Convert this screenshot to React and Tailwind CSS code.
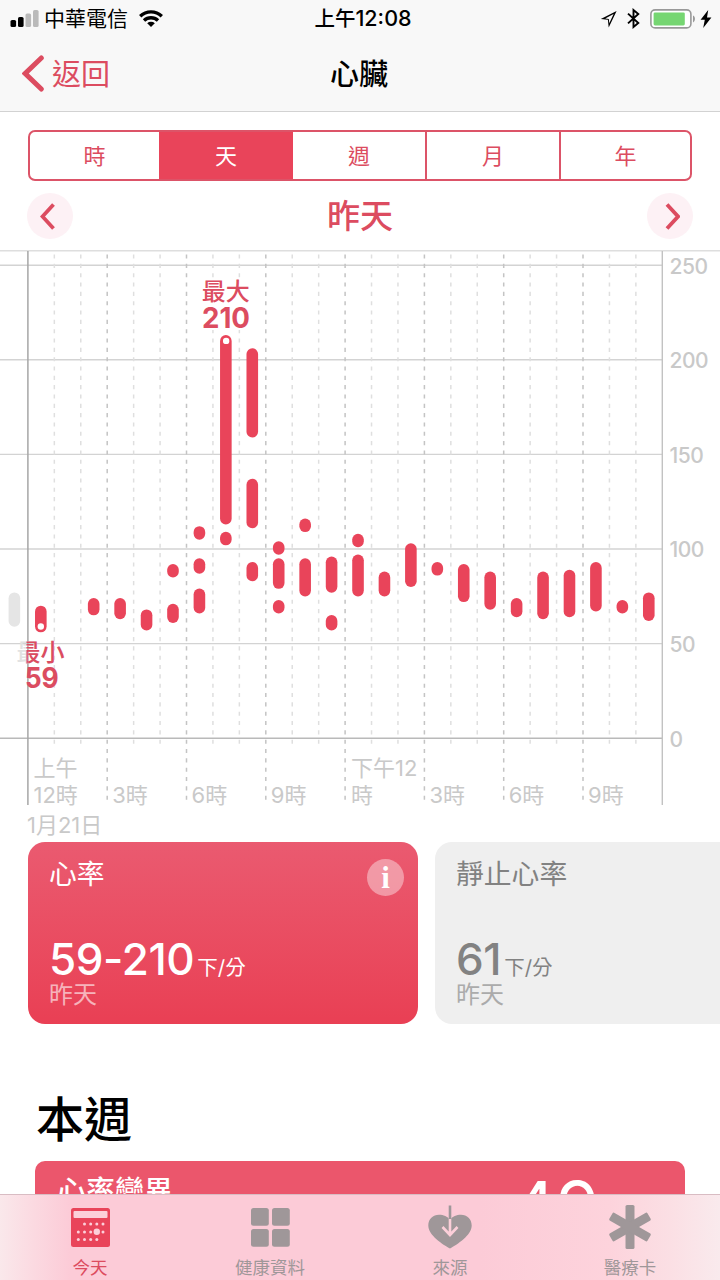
import React from 'react';

const RANGES = ['時', '天', '週', '月', '年'];

// [hour, low bpm, high bpm]
const SAMPLES = [
  [0, 59, 67], [2, 68, 71], [3, 66, 71], [4, 60, 65],
  [5, 88, 89], [5, 64, 68],
  [6, 108, 109], [6, 90, 92], [6, 69, 76],
  [7, 116, 210], [7, 105, 106],
  [8, 162, 203], [8, 114, 134], [8, 86, 90],
  [9, 100, 101], [9, 82, 92], [9, 69, 70],
  [10, 112, 113], [10, 78, 92],
  [11, 80, 93], [11, 60, 62],
  [12, 104, 105], [12, 78, 94],
  [13, 78, 85], [14, 83, 100], [15, 89, 90], [16, 75, 89],
  [17, 71, 85], [18, 67, 71], [19, 66, 85], [20, 67, 86],
  [21, 70, 90], [22, 69, 70], [23, 65, 74],
];

const HOUR_LABELS = [
  [3, '3時'], [6, '6時'], [9, '9時'], [15, '3時'], [18, '6時'], [21, '9時'],
];

const LEFT = 27.9;
const RIGHT = 662.3;
const STEP = (RIGHT - LEFT) / 24;

const hourX = (hour) => LEFT + hour * STEP;
const bpmY = (bpm) => 488.2 - bpm * 1.892;

const Bar = ({ hour, low, high, color }) => (
  <line
    x1={hourX(hour + 0.5) - 0.3}
    x2={hourX(hour + 0.5) - 0.3}
    y1={bpmY(high)}
    y2={bpmY(low)}
    stroke={color}
    strokeWidth="11.6"
    strokeLinecap="round"
  />
);

const MinLabel = ({ fill, clipPath }) => (
  <g fill={fill} clipPath={clipPath} textAnchor="middle">
    <text x="40.5" y="411" fontSize="24" fontWeight="500">最小</text>
    <text x="41.7" y="437.5" fontSize="28" fontWeight="700" textLength="34" lengthAdjust="spacingAndGlyphs">59</text>
  </g>
);

const HeartChart = () => (
  <svg className="block h-[590px] w-[720px]" viewBox="0 0 720 590">
    <defs>
      <clipPath id="day">
        <rect x="26.5" y="0" width="640" height="590" />
      </clipPath>
    </defs>

    <line x1="0" x2="720" y1="0.7" y2="0.7" stroke="#dedede" strokeWidth="1.4" />
    {[250, 200, 150, 100, 50].map((bpm) => (
      <line key={bpm} x1="0" x2={RIGHT} y1={bpmY(bpm)} y2={bpmY(bpm)} stroke="#d3d3d3" strokeWidth="1.4" />
    ))}
    {Array.from({ length: 23 }, (_, i) => i + 1).map((hour) => (
      <line
        key={hour}
        x1={hourX(hour)}
        x2={hourX(hour)}
        y1="2"
        y2={hour % 3 === 0 ? 554 : 498}
        stroke={hour % 3 === 0 ? '#c4c4c4' : '#dfdfdf'}
        strokeWidth="1.5"
        strokeDasharray="4.1 5.23"
        strokeDashoffset="-2.5"
      />
    ))}
    <line x1="0" x2={RIGHT} y1={bpmY(0)} y2={bpmY(0)} stroke="#b9b9b9" strokeWidth="1.6" />
    <line x1={LEFT} x2={LEFT} y1="1" y2="555" stroke="#a6a6a6" strokeWidth="1.5" />
    <line x1={RIGHT} x2={RIGHT} y1="1" y2="555" stroke="#c2c2c2" strokeWidth="1.4" />

    <Bar hour={-1} low={62} high={74} color="#e5e5e5" />
    {SAMPLES.map(([hour, low, high]) => (
      <Bar key={`${hour}-${low}`} hour={hour} low={low} high={high} color="#e9445a" />
    ))}
    <circle cx={hourX(7.5)} cy={bpmY(210)} r="3.2" fill="#fff" />
    <circle cx={hourX(0.5) - 0.3} cy={bpmY(59)} r="3.2" fill="#fff" />

    <g fill="#dc4c60" textAnchor="middle">
      <rect x="200" y="30" width="52" height="50" fill="#fff" />
      <text x="225.8" y="50" fontSize="24" fontWeight="500">最大</text>
      <text x="226" y="77.5" fontSize="28.5" fontWeight="700" textLength="48" lengthAdjust="spacingAndGlyphs">210</text>
    </g>
    <MinLabel fill="#e2e2e2" />
    <MinLabel fill="#dc4c60" clipPath="url(#day)" />

    <g fill="#c9c9c9" fontSize="22">
      {[250, 200, 150, 100, 50, 0].map((bpm) => (
        <text key={bpm} x="669.5" y={bpmY(bpm) + 8.4} fontSize="21" fontWeight="500" letterSpacing="-0.5">{bpm}</text>
      ))}
      <text x="33.5" y="526">上午</text>
      <text x="33.5" y="552.5">12時</text>
      <text x="351" y="526">下午12</text>
      <text x="351" y="552.5">時</text>
      {HOUR_LABELS.map(([hour, label]) => (
        <text key={hour} x={hourX(hour) + 5} y="552.5">{label}</text>
      ))}
      <text x="27" y="582.5">1月21日</text>
    </g>
  </svg>
);

const StatusBar = () => (
  <div className="grid h-9 grid-cols-3 items-center pl-2.5 pr-2 text-black">
    <div className="flex items-center">
      <svg className="h-[18px] w-[29px]" viewBox="0 0 29 18">
        <rect x="0.5" y="10" width="5.6" height="7" rx="1.6" />
        <rect x="8" y="7" width="5.6" height="10" rx="1.6" />
        <rect x="15.5" y="3.5" width="5.6" height="13.5" rx="1.6" fill="#bababa" />
        <rect x="23" y="0" width="5.6" height="17" rx="1.6" fill="#bababa" />
      </svg>
      <span className="ml-[5px] text-[21px] leading-9">中華電信</span>
      <svg className="ml-[11px] h-[18px] w-6" viewBox="0 0 24 18" fill="none" stroke="#000" strokeWidth="3.4">
        <path d="M1.2 6.2a15.6 15.6 0 0 1 21.6 0" />
        <path d="M5 10.600a10.200 10.200 0 0 1 14 0" />
        <path d="M12 17 8.200 13.300a5.600 5.600 0 0 1 7.600 0Z" fill="#000" stroke="none" />
      </svg>
    </div>
    <div className="flex items-baseline justify-center pl-1 font-medium leading-9">
      <span className="text-[20.5px]">上午</span>
      <span className="text-[21.5px] leading-9">12:08</span>
    </div>
    <div className="flex items-center justify-end">
      <svg className="h-[18px] w-[17px]" viewBox="0 0 17 18">
        <path fillRule="evenodd" d="M16.600 1 .8 8.900l7.100.9.800 7.600Zm-3 3.100-4.300 9.100-.5-4.200-3.600-.6Z" />
      </svg>
      <svg className="ml-2.5 h-[21px] w-[13px]" viewBox="0 0 13 21" fill="none" stroke="#000" strokeWidth="1.9">
        <path d="m1 5.6 10.300 9.400L6.500 19V2l4.800 4L1 15.4" />
      </svg>
      <svg className="ml-2.5 h-5 w-[46px]" viewBox="0 0 46 20">
        <rect x="0.9" y="0.9" width="40" height="18" rx="4.2" fill="#fff" stroke="#999" strokeWidth="1.6" />
        <rect x="3.6" y="3.4" width="31.2" height="13" rx="1.4" fill="#76d672" />
        <path d="M43 6.6c2.6 1 2.6 5.8 0 6.8Z" fill="#999" />
      </svg>
      <svg className="ml-1 h-[18px] w-3" viewBox="0 0 12 18">
        <path d="M8.2 0 .6 9.8h4.2L3.2 18 11.4 7.4H7Z" />
      </svg>
    </div>
  </div>
);

const NavBar = () => (
  <div className="grid h-[75px] grid-cols-3 items-center px-[22px]">
    <div className="flex items-center gap-2 text-[#dc4c60]">
      <svg className="h-[37px] w-[22px]" viewBox="0 0 22 37" fill="none" stroke="currentColor" strokeWidth="5" strokeLinecap="round">
        <path d="M19.3 3 3.2 18.5l16.1 15.5" />
      </svg>
      <span className="pt-0.5 text-[29px] leading-10">返回</span>
    </div>
    <h1 className="pr-0.5 pt-0.5 text-center text-[29px] font-medium leading-10">心臟</h1>
  </div>
);

const RoundButton = ({ path }) => (
  <button className="flex size-[46px] items-center justify-center rounded-full bg-[#fdf1f5] text-[#dc4c60]">
    <svg className="h-7 w-5" viewBox="0 0 20 28" fill="none" stroke="currentColor" strokeWidth="3.8">
      <path d={path} />
    </svg>
  </button>
);

const MetricCard = ({ title, value, active }) => (
  <div
    className={`h-[182px] w-[390px] shrink-0 rounded-[17px] px-[21px] pt-3 ${
      active ? 'bg-linear-to-b from-[#ea5a70] to-[#e93f54] text-white' : 'bg-[#efefef] text-[#828282]'
    }`}
  >
    <div className="flex h-[82px] items-start justify-between">
      <h2 className="text-[27.8px] leading-10">{title}</h2>
      {active && (
        <span className="-mr-[7px] mt-[5px] flex size-[37px] items-center justify-center rounded-full bg-white/40 font-['Liberation_Serif',serif] text-[31px] font-bold leading-none">
          i
        </span>
      )}
    </div>
    <div className="flex h-[47px] items-baseline">
      <span className="text-[44px] font-medium leading-[46px] tracking-[-0.4px]">{value}</span>
      <span className="ml-[3px] text-[20.5px] leading-none">下/分</span>
    </div>
    <p className={`text-[24px] leading-6 ${active ? 'text-white/60' : 'text-[#ababab]'}`}>昨天</p>
  </div>
);

const CalendarIcon = () => (
  <svg className="size-[39px]" viewBox="0 0 39 39">
    <rect width="39" height="39" rx="2.5" fill="#e9445a" />
    <rect x="2.5" y="3" width="34" height="7" rx="1" fill="#fccfd9" />
    <g fill="#fccfd9">
      {[13.5, 19.7, 25.8, 32].map((x) => <circle key={x} cx={x} cy="16" r="1.5" />)}
      {[7.3, 13.5, 19.7, 32].map((x) => <circle key={x} cx={x} cy="24" r="1.5" />)}
      {[7.3, 13.5, 19.7, 25.8].map((x) => <circle key={x} cx={x} cy="31.6" r="1.5" />)}
      <circle cx="25.8" cy="23.8" r="3.2" />
    </g>
  </svg>
);

const GridIcon = () => (
  <svg className="size-[39px]" viewBox="0 0 39 39" fill="currentColor">
    <rect width="17.8" height="17.8" rx="2.5" />
    <rect x="21" width="17.8" height="17.8" rx="2.5" />
    <rect y="21" width="17.8" height="17.8" rx="2.5" />
    <rect x="21" y="21" width="17.8" height="17.8" rx="2.5" />
  </svg>
);

const SourceIcon = () => (
  <svg className="h-[44px] w-11" viewBox="0 0 44 44" fill="none">
    <path d="M22 43.500C15 39.500.3 30.500.3 20.500.3 14 5 9.700 11 9.700c4.500 0 8.500 1.500 11 5.300 2.500-3.800 6.500-5.300 11-5.300 6 0 10.700 4.300 10.700 10.800C43.700 30.500 29 39.500 22 43.500Z" fill="currentColor" />
    <path d="M22 13.500v16M14.500 22l7.500 8 7.500-8" stroke="#fccfd9" strokeWidth="2.600" />
    <path d="M22 .5v13.500" stroke="currentColor" strokeWidth="2.600" />
  </svg>
);

const MedicalIcon = () => (
  <svg className="h-[44px] w-[42px]" viewBox="-21 -22 42 44" fill="currentColor">
    {[0, 60, 120].map((angle) => (
      <rect key={angle} x="-4.500" y="-22" width="9" height="44" rx="1.600" transform={`rotate(${angle})`} />
    ))}
  </svg>
);

const TABS = [
  { label: '今天', icon: CalendarIcon, active: true },
  { label: '健康資料', icon: GridIcon },
  { label: '來源', icon: SourceIcon },
  { label: '醫療卡', icon: MedicalIcon },
];

const TabBar = () => (
  <nav className="h-[86px] border-t border-[#d9bcc3] bg-[linear-gradient(90deg,#fae8eb_0px,#fbdbe2_30px,#fccbd7_70px,#fccbd7_480px,#fdd3dc_610px,#fbdfe4_670px,#f9eaed_720px)]">
    <ul className="grid h-full grid-cols-4">
      {TABS.map(({ label, icon: Icon, active }) => (
        <li key={label} className={`flex flex-col items-center pt-[9px] ${active ? 'text-[#dc4c60]' : 'text-[#9f9799]'}`}>
          <div className="flex h-[46px] items-center">
            <Icon />
          </div>
          <span className="mt-1.5 text-[17.5px] leading-6">{label}</span>
        </li>
      ))}
    </ul>
  </nav>
);

const App = () => {
  return (
    <div className="flex h-[1280px] w-[720px] flex-col overflow-hidden bg-white font-['Inter','Noto_Sans_CJK_TC',sans-serif]">
      <header className="h-28 shrink-0 border-b border-[#d2d2d2] bg-[#f8f8f8]">
        <StatusBar />
        <NavBar />
      </header>

      <main className="flex min-h-0 flex-1 flex-col overflow-hidden">
        <div className="mx-7 mt-[18px] grid h-[51px] shrink-0 grid-cols-[129px_134px_132px_134px_1fr] overflow-hidden rounded-[7px] border-2 border-[#dc5468]">
          {RANGES.map((range, i) => (
            <button
              key={range}
              className={`pt-px text-[22px] ${i > 2 ? 'border-l-2 border-[#dc5468]' : ''} ${
                range === '天' ? 'bg-[#e9445a] text-white' : 'text-[#dc4c60]'
              }`}
            >
              {range}
            </button>
          ))}
        </div>

        <div className="mt-3 flex h-[46px] shrink-0 items-center justify-between px-[27px]">
          <RoundButton path="M13.500 2.500 2.500 14.500l11 12" />
          <span className="text-[33px] font-medium leading-[46px] text-[#dc4c60]">昨天</span>
          <RoundButton path="M7 2.500l11 12-11 12" />
        </div>

        <div className="mt-[11px] shrink-0">
          <HeartChart />
        </div>

        <div className="mt-0.5 flex shrink-0 gap-[17px] pl-7">
          <MetricCard title="心率" value="59-210" active />
          <MetricCard title="靜止心率" value="61" />
        </div>

        <h2 className="ml-9 mt-[68px] shrink-0 text-[48px] font-medium leading-[56px]">本週</h2>

        <div className="mx-[35px] mt-[13px] flex h-24 shrink-0 justify-between rounded-t-[10px] bg-[#eb566c] pl-[22px] pr-[86px] text-white">
          <h3 className="pt-[11px] text-[29px] font-medium leading-10">心率變異</h3>
          <span className="pt-[11px] text-[69px] leading-[69px]">49</span>
        </div>
      </main>

      <TabBar />
    </div>
  );
};

export default App;
